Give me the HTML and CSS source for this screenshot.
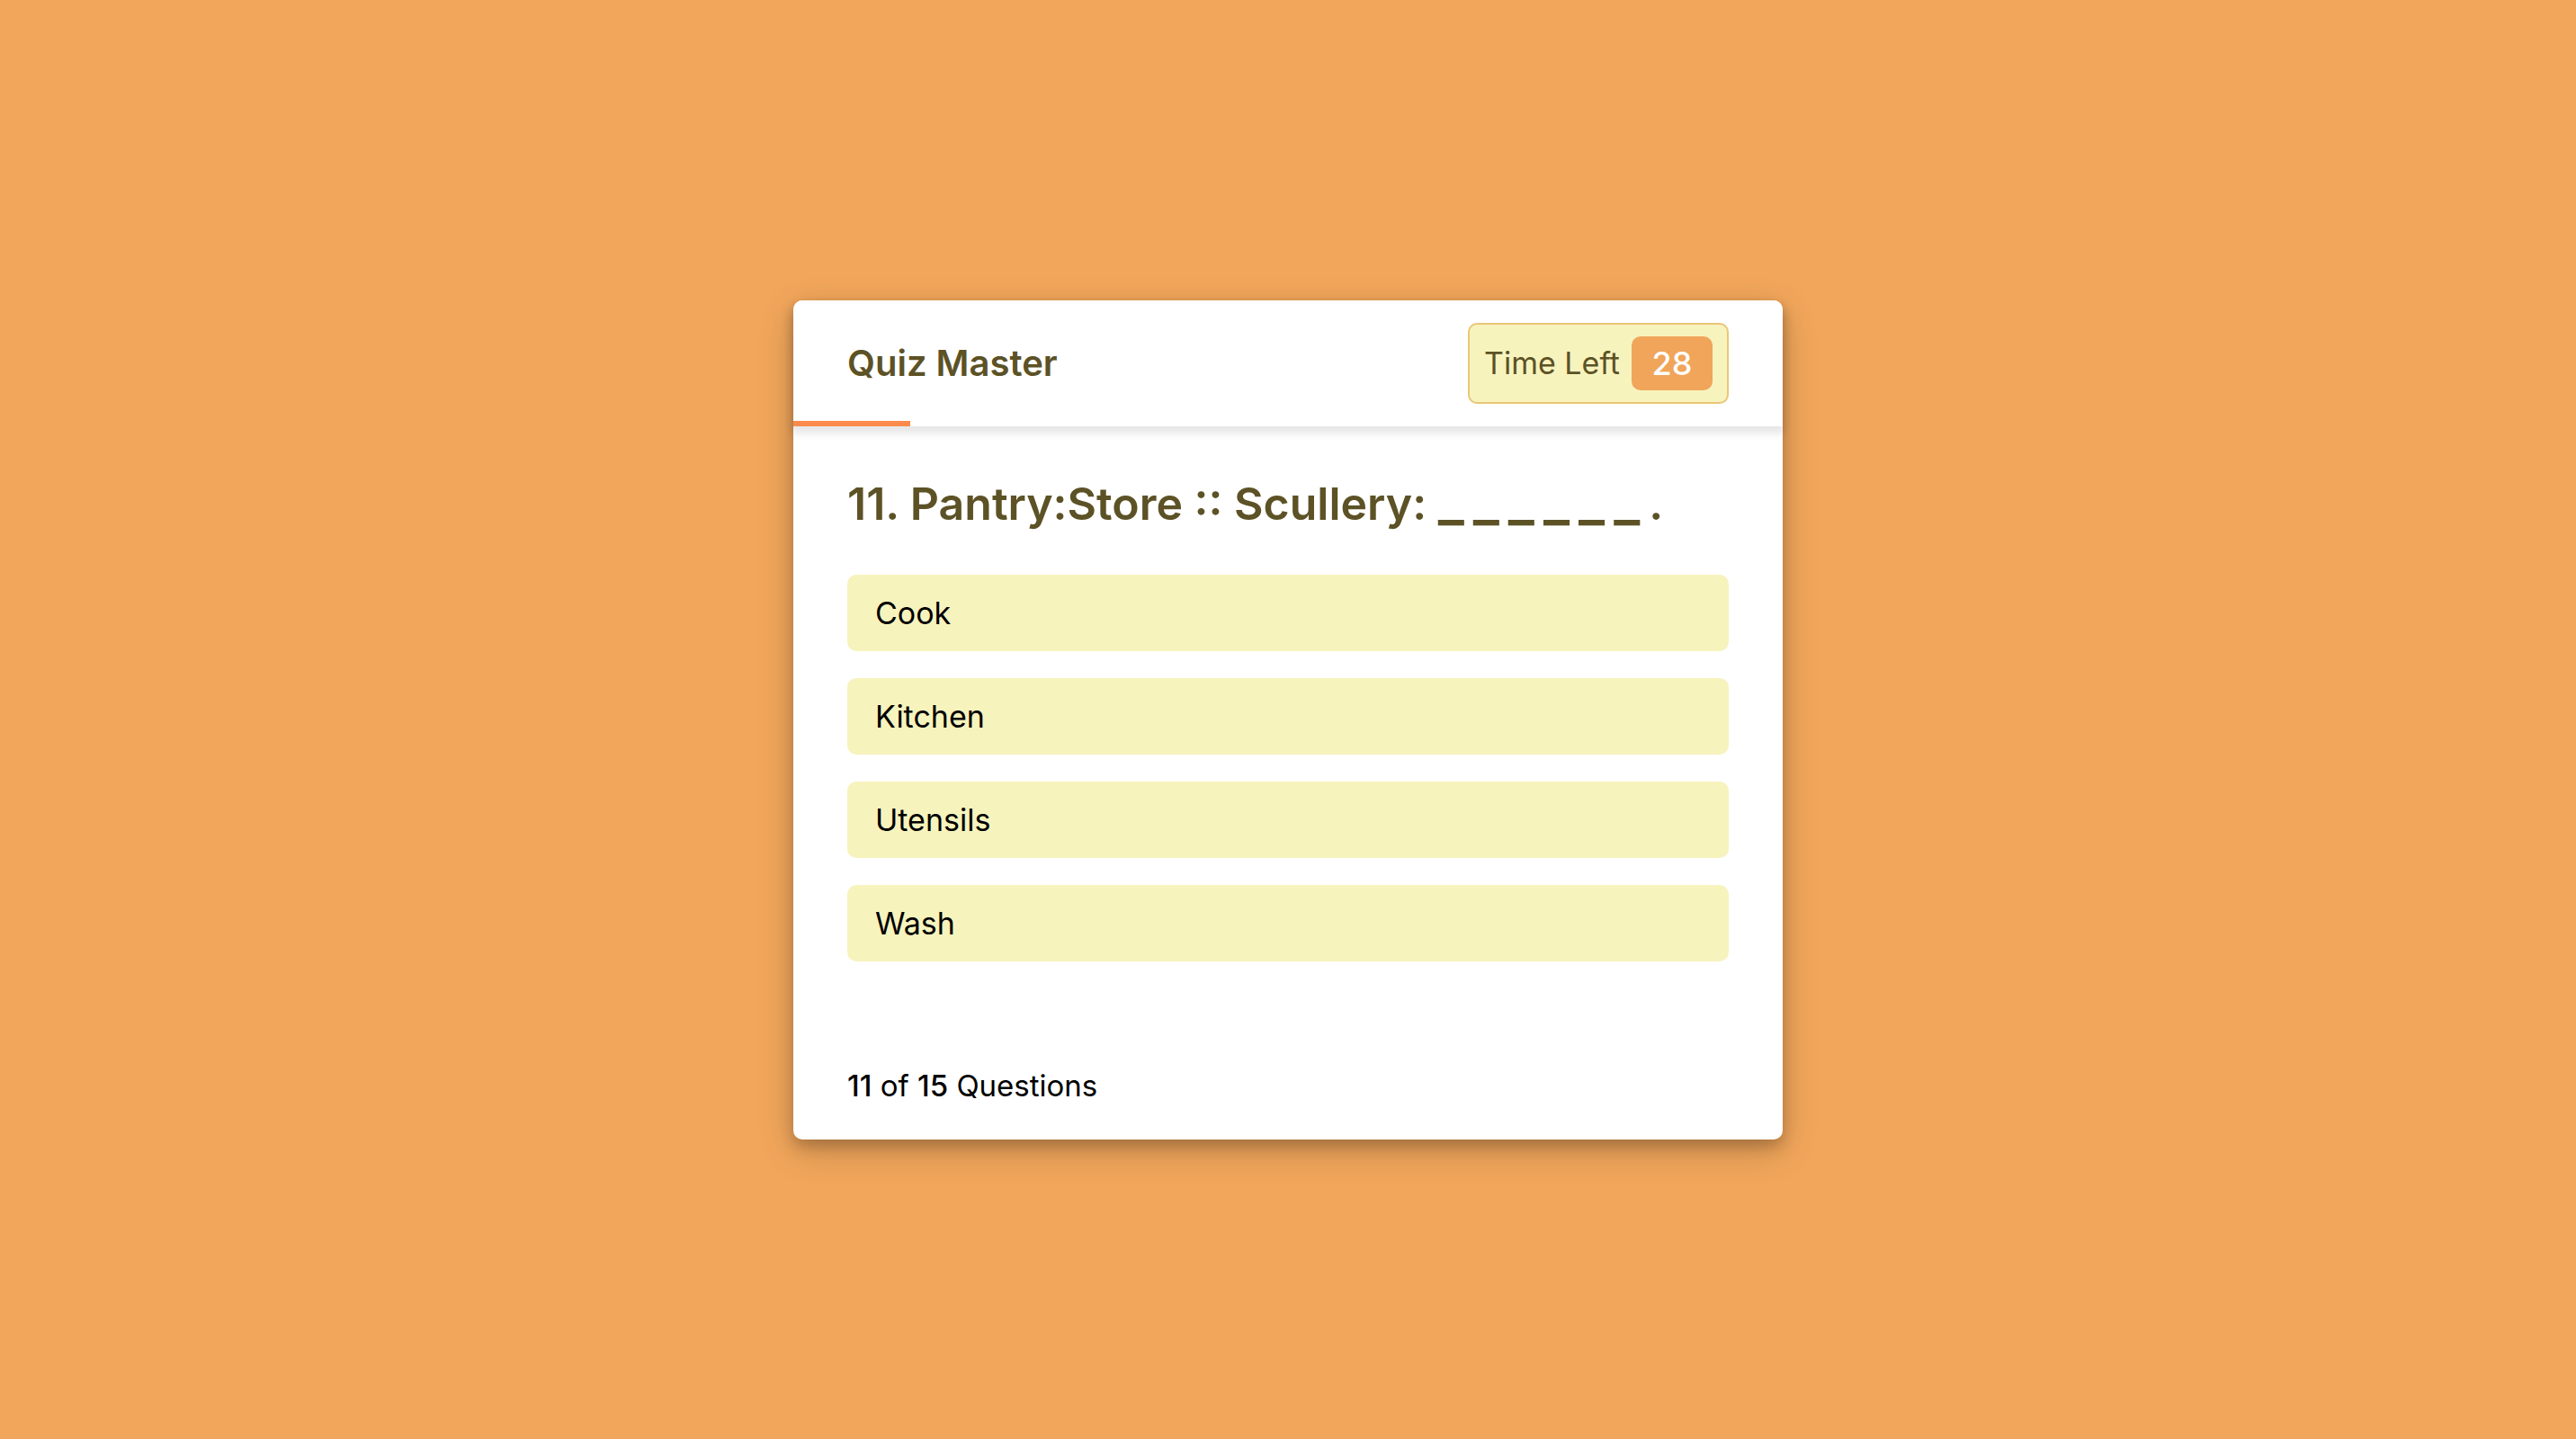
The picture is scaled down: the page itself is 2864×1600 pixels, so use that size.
FILE: index.html
```html
<!DOCTYPE html>
<html lang="en">
<head>
<meta charset="utf-8">
<title>Quiz Master</title>
<link rel="stylesheet" href="styles.css">
</head>
<body>
  <div class="quiz-box">
    <header class="quiz-header">
      <div class="title">Quiz Master</div>
      <div class="timer">
        <div class="time-left-txt">Time Left</div>
        <div class="timer-sec">28</div>
      </div>
      <div class="time-line"></div>
    </header>
    <section class="quiz-body">
      <div class="que-text">11. Pantry:Store :: Scullery: <span class="blank">______</span>.</div>
      <div class="option-list">
        <div class="option">Cook</div>
        <div class="option">Kitchen</div>
        <div class="option">Utensils</div>
        <div class="option">Wash</div>
      </div>
    </section>
    <footer class="quiz-footer">
      <div class="total-que"><span class="num">11</span> of <span class="num">15</span> Questions</div>
    </footer>
  </div>
</body>
</html>
```
FILE: styles.css
```css
* {
  box-sizing: border-box;
}
html, body {
  margin: 0;
  padding: 0;
}
body {
  height: 100vh;
  background: #f1a65b;
  font-family: "Inter", "Open Sans", sans-serif;
  display: flex;
  align-items: center;
  justify-content: center;
}
.quiz-box {
  width: 1100px;
  background: #fff;
  border-radius: 10px;
  box-shadow: 0 8px 16px 0 rgba(0, 0, 0, 0.2), 0 12px 40px 0 rgba(0, 0, 0, 0.19);
}
.quiz-header {
  position: relative;
  height: 140px;
  padding: 0 60px;
  background: #fff;
  border-radius: 10px 10px 0 0;
  display: flex;
  align-items: center;
  justify-content: space-between;
  box-shadow: 0 6px 10px 2px rgba(0, 0, 0, 0.1);
  z-index: 1;
}
.title {
  font-size: 40px;
  font-weight: 600;
  color: #5c5226;
}
.timer {
  width: 290px;
  height: 90px;
  padding: 0 16px;
  background: #f7f3bd;
  border: 2px solid #eac677;
  border-radius: 10px;
  display: flex;
  align-items: center;
  justify-content: space-between;
  color: #5c5226;
}
.time-left-txt {
  font-size: 34px;
  font-weight: 400;
}
.timer-sec {
  width: 90px;
  height: 60px;
  line-height: 56px;
  text-align: center;
  font-size: 36px;
  font-weight: 500;
  color: #fff;
  background: #f0a55a;
  border: 2px solid #f0a55a;
  border-radius: 10px;
}
.time-line {
  position: absolute;
  left: 0;
  bottom: 0;
  width: 130px;
  height: 6px;
  background: #fb8a4c;
}
.quiz-body {
  padding: 49px 60px 40px;
  background: #fff;
}
.que-text {
  font-size: 50px;
  font-weight: 600;
  line-height: 75px;
  color: #5c5226;
}
.blank {
  font-size: 62px;
  line-height: 0;
  letter-spacing: 10px;
}
.option-list {
  padding: 41px 0 38px;
  display: flex;
  flex-direction: column;
  gap: 30px;
}
.option {
  height: 85px;
  padding: 0 31px;
  display: flex;
  align-items: center;
  background: #f7f3bd;
  border-radius: 10px;
  font-size: 34px;
  color: #000;
}
.quiz-footer {
  height: 120px;
  padding: 0 60px;
  display: flex;
  align-items: center;
  border-radius: 0 0 10px 10px;
}
.total-que {
  font-size: 33px;
  color: #000;
}
.num {
  font-weight: 500;
}
```
